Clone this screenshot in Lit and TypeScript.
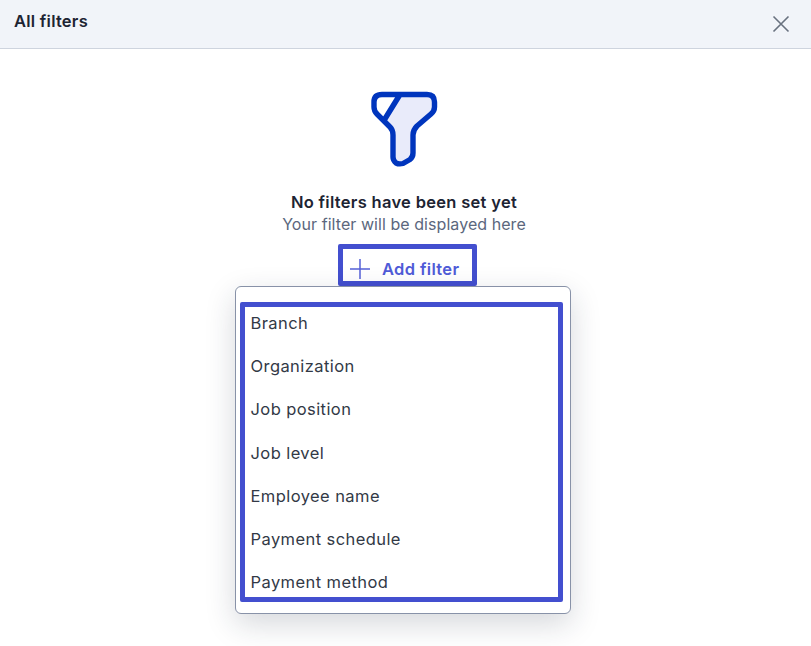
import { LitElement, html, css } from 'lit';
import { customElement } from 'lit/decorators.js';

const FILTERS = [
  'Branch',
  'Organization',
  'Job position',
  'Job level',
  'Employee name',
  'Payment schedule',
  'Payment method',
];

@customElement('app-root')
export class AppRoot extends LitElement {
  static styles = css`
    :host {
      display: block;
      height: 646px;
      background: #fff;
      font-family: Inter, 'Liberation Sans', sans-serif;
      overflow: hidden;
    }

    .header {
      height: 48px;
      box-sizing: content-box;
      display: flex;
      align-items: center;
      justify-content: space-between;
      padding: 0 20px 0 14px;
      background: #f1f4f9;
      border-bottom: 1px solid #ced4de;
    }

    .title {
      font-size: 16.5px;
      letter-spacing: 0.25px;
      font-weight: 600;
      color: #1d2433;
      margin-top: -6px;
    }

    .close {
      display: block;
      width: 20px;
      height: 20px;
    }

    .body {
      position: relative;
      display: flex;
      flex-direction: column;
      align-items: center;
      padding-top: 41px;
    }

    .funnel {
      display: block;
      width: 70px;
      height: 78px;
      margin-right: 3px;
    }

    .empty-title {
      margin-top: 23px;
      margin-right: 3px;
      font-size: 16.5px;
      letter-spacing: 0.3px;
      line-height: 22px;
      font-weight: 600;
      color: #1d2433;
    }

    .empty-sub {
      margin-right: 3px;
      font-size: 16px;
      letter-spacing: 0.06px;
      line-height: 22px;
      color: #5b677d;
    }

    .add {
      margin-top: 9px;
      margin-left: 4px;
      box-sizing: border-box;
      width: 139px;
      height: 42px;
      display: flex;
      align-items: center;
      gap: 12px;
      padding: 8px 0 0 7px;
      border: 5px solid #434fcf;
      border-radius: 2px;
      background: #fff;
      font-size: 16.5px;
      letter-spacing: 0.35px;
      font-weight: 600;
      color: #4f5bd8;
    }

    .add svg {
      display: block;
      width: 20px;
      height: 20px;
    }

    .menu {
      position: absolute;
      left: 235px;
      top: 237px;
      width: 336px;
      height: 328px;
      box-sizing: border-box;
      padding: 15px 7px 11px 4px;
      background: #fff;
      border: 1px solid #8892a8;
      border-radius: 6px;
      box-shadow: 0 10px 30px rgba(30, 40, 60, 0.18);
    }

    .list {
      box-sizing: border-box;
      height: 100%;
      margin: 0;
      padding: 0 0 0 5.5px;
      list-style: none;
      border: 5px solid #434fcf;
      border-radius: 2px;
      overflow: hidden;
    }

    .list li {
      height: 43.2px;
      line-height: 32px;
      font-size: 16.5px;
      color: #323946;
      letter-spacing: 0.42px;
    }
  `;

  render() {
    return html`
      <div class="header">
        <div class="title">All filters</div>
        <svg class="close" viewBox="0 0 20 20" fill="none" stroke="#68717f" stroke-width="1.6">
          <path d="M2.5 2.5 17.5 17.5M17.5 2.5 2.5 17.5"></path>
        </svg>
      </div>
      <div class="body">
        <svg class="funnel" viewBox="369 90 70 78">
          <path
            d="M382 94.5H427Q434.5 94.5 434.5 102V107Q434.5 111 431 114L417 126Q413 130 413 135V153Q413 157 410 159.5L403 163.5Q399 164.5 396 163Q393 160.5 393 157V135Q393 130 390 127L377 114Q374 111 374 107V102Q374 94.5 382 94.5Z"
            fill="#e9ebfa"
          ></path>
          <path d="M382 94.5H400L383 122L377 114Q374 111 374 107V102Q374 94.5 382 94.5Z" fill="#fff"></path>
          <path
            d="M382 94.5H427Q434.5 94.5 434.5 102V107Q434.5 111 431 114L417 126Q413 130 413 135V153Q413 157 410 159.5L403 163.5Q399 164.5 396 163Q393 160.5 393 157V135Q393 130 390 127L377 114Q374 111 374 107V102Q374 94.5 382 94.5ZM400 94.5 383 122"
            fill="none"
            stroke="#0035bd"
            stroke-width="5.4"
            stroke-linejoin="round"
          ></path>
        </svg>
        <div class="empty-title">No filters have been set yet</div>
        <div class="empty-sub">Your filter will be displayed here</div>
        <div class="add">
          <svg viewBox="0 0 20 20" fill="none" stroke="#5561d8" stroke-width="1.5">
            <path d="M10 0V20M0 10H20"></path>
          </svg>
          <span>Add filter</span>
        </div>
        <div class="menu">
          <ul class="list">
            ${FILTERS.map((f) => html`<li>${f}</li>`)}
          </ul>
        </div>
      </div>
    `;
  }
}
